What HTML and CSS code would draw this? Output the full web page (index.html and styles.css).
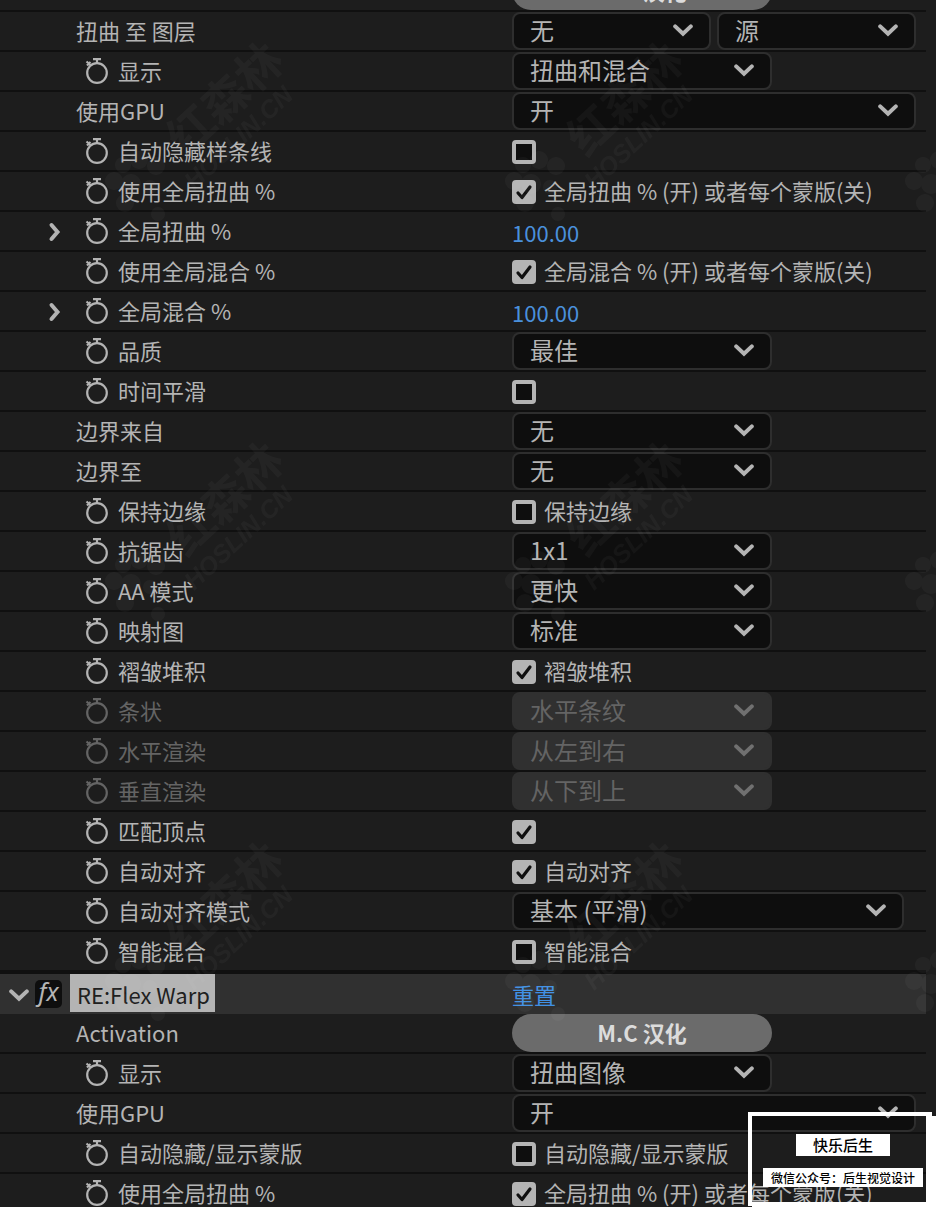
FILE: index.html
```html
<!DOCTYPE html>
<html lang="zh-CN">

<head>
    <meta charset="utf-8">
    <title>RE:Flex Warp</title>

    <link rel="stylesheet" href="styles.css">
</head>

<body>
    <!-- Shared icons -->
    <svg class="icons" aria-hidden="true">
        <symbol id="watch" viewBox="0 0 24 28">
            <circle cx="12" cy="16" r="9.8" fill="none" stroke="currentColor" stroke-width="2.200" />
            <path d="M8 2.200h8M12 2v4M1.500 4.500l4 3.500M2 8.500L5.500 5" fill="none" stroke="currentColor" stroke-width="2.200" />
        </symbol>
        <symbol id="arrow" viewBox="0 0 20 14">
            <path d="M2.200 2.400L10 9.800l7.800-7.400" fill="none" stroke="currentColor" stroke-width="4" stroke-linecap="round" />
        </symbol>
        <symbol id="twirl" viewBox="0 0 14 20">
            <path d="M3.500 4l6 7-6 7" fill="none" stroke="currentColor" stroke-width="4" stroke-linecap="round" />
        </symbol>
        <symbol id="tick" viewBox="0 0 24 24">
            <path d="M6 13l4 4.500 8-10.500" fill="none" stroke="currentColor" stroke-width="3.200" stroke-linecap="round" stroke-linejoin="round" />
        </symbol>
    </svg>

    <main class="panel">
        <div class="rows">
            <div class="row">
                <span class="name">Activation</span>
                <div class="value"><button class="pill">M.C 汉化</button></div>
            </div>
            <div class="row">
                <label class="name" for="warpTo">扭曲 至 图层</label>
                <div class="value">
                    <span class="drop small"><select id="warpTo"><option>无</option></select><svg><use href="#arrow" /></svg></span>
                    <span class="drop small"><select aria-label="源"><option>源</option></select><svg><use href="#arrow" /></svg></span>
                </div>
            </div>
            <div class="row">
                <div class="name timed"><button class="watch" aria-label="关键帧"><svg><use href="#watch" /></svg></button><label for="display">显示</label></div>
                <div class="value"><span class="drop"><select id="display"><option>扭曲和混合</option></select><svg><use href="#arrow" /></svg></span></div>
            </div>
            <div class="row">
                <label class="name" for="gpu">使用GPU</label>
                <div class="value"><span class="drop full"><select id="gpu"><option>开</option></select><svg><use href="#arrow" /></svg></span></div>
            </div>
            <div class="row">
                <div class="name timed"><button class="watch" aria-label="关键帧"><svg><use href="#watch" /></svg></button><label for="hideSpline">自动隐藏样条线</label></div>
                <div class="value"><span class="check"><input type="checkbox" id="hideSpline"><svg><use href="#tick" /></svg></span></div>
            </div>
            <div class="row">
                <div class="name timed"><button class="watch" aria-label="关键帧"><svg><use href="#watch" /></svg></button><span>使用全局扭曲 %</span></div>
                <div class="value"><span class="check"><input type="checkbox" id="useWarp" checked><svg><use href="#tick" /></svg></span><label for="useWarp">全局扭曲 % (开) 或者每个蒙版(关)</label></div>
            </div>
            <div class="row">
                <div class="name timed twirled"><button class="twirl" aria-label="展开"><svg><use href="#twirl" /></svg></button><button class="watch" aria-label="关键帧"><svg><use href="#watch" /></svg></button><label for="warp">全局扭曲 %</label></div>
                <div class="value"><input type="text" class="number" id="warp" value="100.00"></div>
            </div>
            <div class="row">
                <div class="name timed"><button class="watch" aria-label="关键帧"><svg><use href="#watch" /></svg></button><span>使用全局混合 %</span></div>
                <div class="value"><span class="check"><input type="checkbox" id="useBlend" checked><svg><use href="#tick" /></svg></span><label for="useBlend">全局混合 % (开) 或者每个蒙版(关)</label></div>
            </div>
            <div class="row">
                <div class="name timed twirled"><button class="twirl" aria-label="展开"><svg><use href="#twirl" /></svg></button><button class="watch" aria-label="关键帧"><svg><use href="#watch" /></svg></button><label for="blend">全局混合 %</label></div>
                <div class="value"><input type="text" class="number" id="blend" value="100.00"></div>
            </div>
            <div class="row">
                <div class="name timed"><button class="watch" aria-label="关键帧"><svg><use href="#watch" /></svg></button><label for="quality">品质</label></div>
                <div class="value"><span class="drop"><select id="quality"><option>最佳</option></select><svg><use href="#arrow" /></svg></span></div>
            </div>
            <div class="row">
                <div class="name timed"><button class="watch" aria-label="关键帧"><svg><use href="#watch" /></svg></button><label for="smooth">时间平滑</label></div>
                <div class="value"><span class="check"><input type="checkbox" id="smooth"><svg><use href="#tick" /></svg></span></div>
            </div>
            <div class="row">
                <label class="name" for="edgeFrom">边界来自</label>
                <div class="value"><span class="drop"><select id="edgeFrom"><option>无</option></select><svg><use href="#arrow" /></svg></span></div>
            </div>
            <div class="row">
                <label class="name" for="edgeTo">边界至</label>
                <div class="value"><span class="drop"><select id="edgeTo"><option>无</option></select><svg><use href="#arrow" /></svg></span></div>
            </div>
            <div class="row">
                <div class="name timed"><button class="watch" aria-label="关键帧"><svg><use href="#watch" /></svg></button><span>保持边缘</span></div>
                <div class="value"><span class="check"><input type="checkbox" id="keepEdge"><svg><use href="#tick" /></svg></span><label for="keepEdge">保持边缘</label></div>
            </div>
            <div class="row">
                <div class="name timed"><button class="watch" aria-label="关键帧"><svg><use href="#watch" /></svg></button><label for="antialias">抗锯齿</label></div>
                <div class="value"><span class="drop"><select id="antialias"><option>1x1</option></select><svg><use href="#arrow" /></svg></span></div>
            </div>
            <div class="row">
                <div class="name timed"><button class="watch" aria-label="关键帧"><svg><use href="#watch" /></svg></button><label for="aaMode">AA 模式</label></div>
                <div class="value"><span class="drop"><select id="aaMode"><option>更快</option></select><svg><use href="#arrow" /></svg></span></div>
            </div>
            <div class="row">
                <div class="name timed"><button class="watch" aria-label="关键帧"><svg><use href="#watch" /></svg></button><label for="mapping">映射图</label></div>
                <div class="value"><span class="drop"><select id="mapping"><option>标准</option></select><svg><use href="#arrow" /></svg></span></div>
            </div>
            <div class="row">
                <div class="name timed"><button class="watch" aria-label="关键帧"><svg><use href="#watch" /></svg></button><span>褶皱堆积</span></div>
                <div class="value"><span class="check"><input type="checkbox" id="folds" checked><svg><use href="#tick" /></svg></span><label for="folds">褶皱堆积</label></div>
            </div>
            <div class="row off">
                <div class="name timed"><button class="watch" aria-label="关键帧" disabled><svg><use href="#watch" /></svg></button><label for="strips">条状</label></div>
                <div class="value"><span class="drop"><select id="strips" disabled><option>水平条纹</option></select><svg><use href="#arrow" /></svg></span></div>
            </div>
            <div class="row off">
                <div class="name timed"><button class="watch" aria-label="关键帧" disabled><svg><use href="#watch" /></svg></button><label for="renderH">水平渲染</label></div>
                <div class="value"><span class="drop"><select id="renderH" disabled><option>从左到右</option></select><svg><use href="#arrow" /></svg></span></div>
            </div>
            <div class="row off">
                <div class="name timed"><button class="watch" aria-label="关键帧" disabled><svg><use href="#watch" /></svg></button><label for="renderV">垂直渲染</label></div>
                <div class="value"><span class="drop"><select id="renderV" disabled><option>从下到上</option></select><svg><use href="#arrow" /></svg></span></div>
            </div>
            <div class="row">
                <div class="name timed"><button class="watch" aria-label="关键帧"><svg><use href="#watch" /></svg></button><label for="vertices">匹配顶点</label></div>
                <div class="value"><span class="check"><input type="checkbox" id="vertices" checked><svg><use href="#tick" /></svg></span></div>
            </div>
            <div class="row">
                <div class="name timed"><button class="watch" aria-label="关键帧"><svg><use href="#watch" /></svg></button><span>自动对齐</span></div>
                <div class="value"><span class="check"><input type="checkbox" id="align" checked><svg><use href="#tick" /></svg></span><label for="align">自动对齐</label></div>
            </div>
            <div class="row">
                <div class="name timed"><button class="watch" aria-label="关键帧"><svg><use href="#watch" /></svg></button><label for="alignMode">自动对齐模式</label></div>
                <div class="value"><span class="drop wide"><select id="alignMode"><option>基本 (平滑)</option></select><svg><use href="#arrow" /></svg></span></div>
            </div>
            <div class="row">
                <div class="name timed"><button class="watch" aria-label="关键帧"><svg><use href="#watch" /></svg></button><span>智能混合</span></div>
                <div class="value"><span class="check"><input type="checkbox" id="smartBlend"><svg><use href="#tick" /></svg></span><label for="smartBlend">智能混合</label></div>
            </div>

            <!-- Second effect -->
            <div class="row effect">
                <div class="name"><button class="open" aria-label="折叠"><svg><use href="#arrow" /></svg></button><button class="fx">fx</button><span class="title">RE:Flex Warp</span></div>
                <div class="value"><a href="#" class="reset">重置</a></div>
            </div>
            <div class="row first">
                <span class="name">Activation</span>
                <div class="value"><button class="pill">M.C 汉化</button></div>
            </div>
            <div class="row">
                <div class="name timed"><button class="watch" aria-label="关键帧"><svg><use href="#watch" /></svg></button><label for="display2">显示</label></div>
                <div class="value"><span class="drop"><select id="display2"><option>扭曲图像</option></select><svg><use href="#arrow" /></svg></span></div>
            </div>
            <div class="row">
                <label class="name" for="gpu2">使用GPU</label>
                <div class="value"><span class="drop full"><select id="gpu2"><option>开</option></select><svg><use href="#arrow" /></svg></span></div>
            </div>
            <div class="row">
                <div class="name timed"><button class="watch" aria-label="关键帧"><svg><use href="#watch" /></svg></button><span>自动隐藏/显示蒙版</span></div>
                <div class="value"><span class="check"><input type="checkbox" id="hideMask"><svg><use href="#tick" /></svg></span><label for="hideMask">自动隐藏/显示蒙版</label></div>
            </div>
            <div class="row">
                <div class="name timed"><button class="watch" aria-label="关键帧"><svg><use href="#watch" /></svg></button><span>使用全局扭曲 %</span></div>
                <div class="value"><span class="check"><input type="checkbox" id="useWarp2" checked><svg><use href="#tick" /></svg></span><label for="useWarp2">全局扭曲 % (开) 或者每个蒙版(关)</label></div>
            </div>
        </div>

        <svg class="watermark" aria-hidden="true">
            <pattern id="mark" x="100" y="0" width="400" height="400" patternUnits="userSpaceOnUse">
                <circle cx="14" cy="181" r="9" />
                <circle cx="23" cy="165" r="8" />
                <circle cx="39" cy="160" r="9" />
                <circle cx="56" cy="166" r="9" />
                <circle cx="31" cy="184" r="10" />
                <circle cx="25" cy="203" r="9" />
                <circle cx="50" cy="187" r="7" />
                <circle cx="58" cy="214" r="7" />
                <text class="mark-name" transform="translate(86 158) rotate(-43)">红森林</text>
                <text class="mark-site" transform="translate(94 191) rotate(-43)">HOSLIN.CN</text>
            </pattern>
            <rect width="100%" height="100%" fill="url(#mark)" />
        </svg>

        <aside class="badge">
            <strong>快乐后生</strong>
            <span>微信公众号：后生视觉设计</span>
        </aside>
    </main>
</body>

</html>
```

FILE: styles.css
```css
body {
    margin: 0;
    background-color: #1d1d1d;
    color: #b4b4b4;
    font-family: "Noto Sans CJK SC", sans-serif;
    font-size: 22px;
    line-height: 32px;
}

button,
select,
input {
    margin: 0;
    padding: 0;
    border: none;
    background: none;
    color: inherit;
    font: inherit;
}

svg {
    display: block;
}

.icons {
    position: absolute;
    width: 0;
    height: 0;
}

.panel {
    position: relative;
    height: 100vh;
    overflow: hidden;
}

/* List is scrolled down a little */
.rows {
    margin-top: -30px;
    margin-right: 10px;
}

.row {
    display: grid;
    grid-template-columns: 512px 1fr;
    height: 38px;
    border-top: 2px solid #101010;
}

.row.first {
    border-top: none;
}

.name {
    display: flex;
    align-items: center;
    padding-bottom: 2px;
    padding-left: 76px;
}

.name.timed {
    gap: 9px;
    padding-bottom: 0;
    padding-left: 85px;
}

.name.twirled {
    padding-left: 48px;
}

.timed label,
.timed span,
.value label {
    padding-bottom: 2px;
}

.value {
    display: flex;
    align-items: center;
    gap: 6px;
}

.watch,
.watch svg {
    width: 24px;
    height: 28px;
}

.twirl {
    width: 28px;
}

.twirl svg {
    width: 14px;
    height: 22px;
}

/* Drop-downs */
.drop {
    display: grid;
    align-items: center;
    width: 260px;
}

.drop.small {
    width: 199px;
}

.drop.wide {
    width: 392px;
}

.drop.full {
    width: 404px;
}

.drop select,
.drop svg {
    grid-area: 1 / 1;
}

.drop select {
    appearance: none;
    box-sizing: border-box;
    width: 100%;
    height: 38px;
    padding-bottom: 2px;
    padding-left: 16px;
    border: 2px solid #2e2e2e;
    border-radius: 8px;
    background-color: #0e0e0e;
    font-size: 24px;
}

.drop svg {
    justify-self: end;
    width: 20px;
    height: 14px;
    margin-right: 18px;
    pointer-events: none;
}

.off {
    color: #646464;
}

.off .drop svg {
    color: #707070;
}

.off select {
    border-color: #303030;
    background-color: #303030;
    opacity: 1;
}

/* Check boxes */
.check {
    display: grid;
    margin-right: 2px;
    padding-top: 2px;
}

.check input,
.check svg {
    grid-area: 1 / 1;
    width: 24px;
    height: 24px;
}

.check input {
    appearance: none;
    box-sizing: border-box;
    border: 4px solid #b4b4b4;
    border-radius: 4px;
    background-color: #0e0e0e;
}

.check input:checked {
    background-color: #b4b4b4;
}

.check svg {
    visibility: hidden;
    color: #101010;
    pointer-events: none;
}

.check input:checked + svg {
    visibility: visible;
}

.number {
    width: 100px;
    padding-top: 2px;
    color: #4a90dc;
}

.pill {
    width: 260px;
    height: 38px;
    padding-bottom: 2px;
    border-radius: 19px;
    background-color: #6b6b6b;
    color: #dcdcdc;
    font-weight: bold;
}

/* Effect header */
.effect {
    height: 40px;
    border-top-width: 4px;
    background-color: #303030;
}

.effect .name {
    padding-bottom: 0;
    padding-left: 9px;
}

.open {
    width: 26px;
}

.open svg {
    width: 20px;
    height: 14px;
    margin-top: 4px;
}

.fx {
    width: 27px;
    height: 28px;
    padding-bottom: 6px;
    border-radius: 5px;
    background-color: #0e0e0e;
    font-family: "Noto Sans", sans-serif;
    font-size: 25px;
    font-style: italic;
    line-height: 22px;
}

.title {
    align-self: flex-start;
    margin-left: 8px;
    padding: 4px 5px 2px 7px;
    background-color: #b4b4b4;
    color: #202020;
}

.reset {
    color: #4090e4;
    text-decoration: none;
}

.watermark {
    position: absolute;
    top: 0;
    left: 0;
    width: 100%;
    height: 100%;
    fill: #ffffff;
    opacity: 0.03;
    pointer-events: none;
}

.mark-name {
    font-size: 46px;
    font-weight: bold;
}

.mark-site {
    font-family: "Liberation Sans", sans-serif;
    font-size: 25px;
    font-style: italic;
    font-weight: bold;
}

/* Account badge over the corner */
.badge {
    position: absolute;
    right: 4px;
    bottom: 1px;
    display: flex;
    flex-direction: column;
    align-items: center;
    gap: 12px;
    box-sizing: border-box;
    width: 184px;
    height: 94px;
    padding-top: 18px;
    padding-left: 8px;
    border: 4px solid #ffffff;
    border-right-width: 6px;
    box-shadow: 4px 4px 0 #ffffff;
    color: #000000;
}

.badge strong,
.badge span {
    background-color: #ffffff;
}

.badge strong {
    padding: 0 17px;
    font-size: 15px;
    font-weight: 500;
    line-height: 22px;
}

.badge span {
    padding: 0 8px;
    font-size: 12px;
    font-weight: 500;
    line-height: 19px;
    white-space: nowrap;
}
```
